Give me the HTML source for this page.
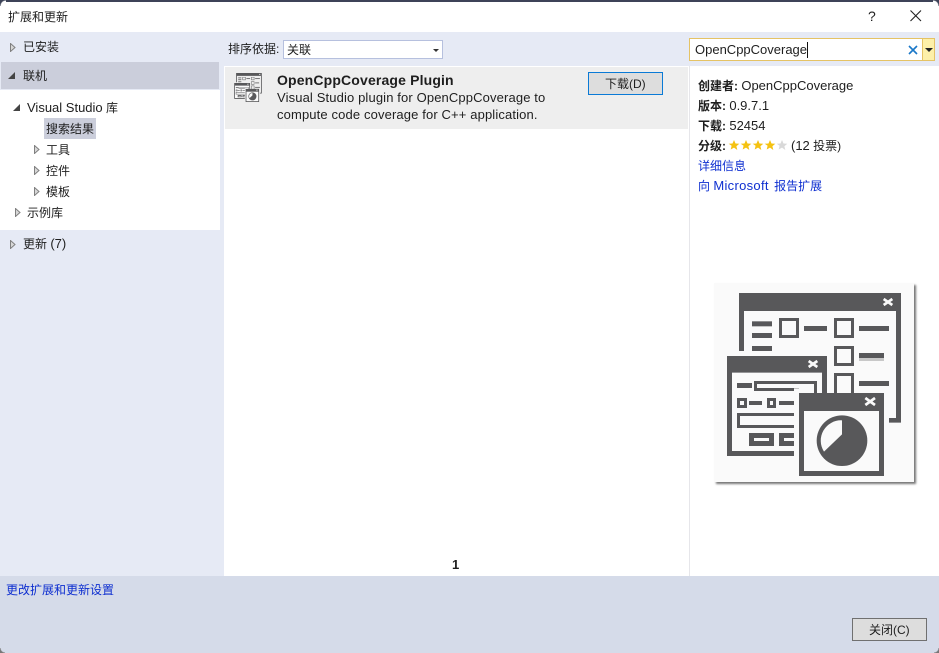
<!DOCTYPE html>
<html lang="zh">
<head>
<meta charset="utf-8">
<title>扩展和更新</title>
<style>
*{box-sizing:border-box;margin:0;padding:0}
html,body{width:939px;height:653px;overflow:hidden;background:#fff}
body{position:relative;font-family:"Liberation Sans","Noto Sans CJK SC",sans-serif;font-size:12px;color:#1e1e1e}
.a{position:absolute}
.t{position:absolute;white-space:nowrap;line-height:16px}
.l{color:#0e2fd0}
.b{font-weight:bold}
.en{font-size:13px}
.d{font-size:13px;letter-spacing:.13px}
.tri-d{position:absolute;width:0;height:0;border-bottom:7px solid #444;border-left:7px solid transparent}
</style>
</head>
<body>
<svg width="0" height="0" style="position:absolute"><defs><path id="tr" d="M.5.5V8.500L5 4.500Z" fill="#d8d8d8" stroke="#808080"/></defs></svg>
<div class="a" style="left:0;top:0;width:939px;height:2px;background:#3d4358"></div>
<div class="a" style="left:0;top:0;width:6px;height:6px;background:radial-gradient(circle at 100% 100%,#fff 5px,#3d4358 6px)"></div>
<div class="a" style="right:0;top:0;width:6px;height:6px;background:radial-gradient(circle at 0 100%,#fff 5px,#3d4358 6px)"></div>
<div class="t" style="left:8px;top:9px;font-size:12px">扩展和更新</div>
<div class="t" style="left:868px;top:8px;font-size:14px;color:#222">?</div>
<svg class="a" style="left:910px;top:10px" width="12" height="12" viewBox="0 0 12 12"><path d="M.5.5l10.5 10.500M11 .5L.5 11" stroke="#222" stroke-width="1.100" fill="none"/></svg>

<div class="a" style="left:0;top:32px;width:939px;height:544px;background:#e6eaf5"></div>

<div class="a" style="left:1px;top:62px;width:218px;height:27px;background:#cbcedb"></div>
<div class="a" style="left:0;top:90px;width:220px;height:140px;background:#fff"></div>
<svg class="a" style="left:10px;top:43px" width="6" height="9"><use href="#tr"/></svg>
<div class="t" style="left:23px;top:39px">已安装</div>
<div class="tri-d" style="left:8px;top:72px"></div>
<div class="t" style="left:23px;top:68px">联机</div>
<div class="tri-d" style="left:13px;top:104px"></div>
<div class="t" style="left:27px;top:100px"><span class="en">Visual Studio</span> 库</div>
<div class="a" style="left:44px;top:118px;width:52px;height:21px;background:#cbcedb"></div>
<div class="t" style="left:46px;top:121px">搜索结果</div>
<svg class="a" style="left:34px;top:145px" width="6" height="9"><use href="#tr"/></svg>
<div class="t" style="left:46px;top:142px">工具</div>
<svg class="a" style="left:34px;top:166px" width="6" height="9"><use href="#tr"/></svg>
<div class="t" style="left:46px;top:163px">控件</div>
<svg class="a" style="left:34px;top:187px" width="6" height="9"><use href="#tr"/></svg>
<div class="t" style="left:46px;top:184px">模板</div>
<svg class="a" style="left:15px;top:208px" width="6" height="9"><use href="#tr"/></svg>
<div class="t" style="left:27px;top:205px">示例库</div>
<svg class="a" style="left:10px;top:240px" width="6" height="9"><use href="#tr"/></svg>
<div class="t" style="left:23px;top:236px">更新 <span class="en">(7)</span></div>

<div class="t" style="left:228px;top:41px">排序依据:</div>
<div class="a" style="left:283px;top:40px;width:160px;height:19px;background:#fff;border:1px solid #b6c0de"></div>
<div class="t" style="left:287px;top:42px">关联</div>
<div class="a" style="left:433px;top:49px;width:0;height:0;border-top:3px solid #333;border-left:3.500px solid transparent;border-right:3.500px solid transparent"></div>

<div class="a" style="left:224px;top:66px;width:465px;height:510px;background:#fff"></div>
<div class="a" style="left:689px;top:66px;width:250px;height:510px;background:#fff;border-left:1px solid #e6e6ea"></div>
<div class="a" style="left:225px;top:67px;width:463px;height:62px;background:#eeeeee"></div>

<svg class="a" style="left:234px;top:73px" width="28" height="29" viewBox="66 54 522 549"><use href="#ic"/></svg>

<div class="t b" style="left:277px;top:72px;font-size:14px;letter-spacing:.15px">OpenCppCoverage Plugin</div>
<div class="t d" style="left:277px;top:90px">Visual Studio plugin for OpenCppCoverage to</div>
<div class="t d" style="left:277px;top:107px">compute code coverage for C++ application.</div>
<div class="a" style="left:588px;top:72px;width:75px;height:23px;background:#dddddd;border:1px solid #0a7ad6"></div>
<div class="t" style="left:605px;top:76px">下载(D)</div>

<div class="a" style="left:689px;top:38px;width:235px;height:23px;background:#fff;border:1px solid #e5c365"></div>
<div class="t en" style="left:695px;top:42px">OpenCppCoverage</div>
<div class="a" style="left:807px;top:42px;width:1px;height:16px;background:#111"></div>
<svg class="a" style="left:908px;top:45px" width="10" height="10" viewBox="0 0 10 10"><path d="M1 1l8 8M9 1l-8 8" stroke="#1a78c8" stroke-width="1.600" fill="none"/></svg>
<div class="a" style="left:922px;top:38px;width:13px;height:23px;background:#fdf0a9;border:1px solid #e5c365"></div>
<div class="a" style="left:925px;top:48px;width:0;height:0;border-top:4px solid #222;border-left:4px solid transparent;border-right:4px solid transparent"></div>

<div class="t" style="left:698px;top:78px"><span class="b">创建者:</span> <span class="en">OpenCppCoverage</span></div>
<div class="t" style="left:698px;top:98px"><span class="b">版本:</span> <span class="en">0.9.7.1</span></div>
<div class="t" style="left:698px;top:118px"><span class="b">下载:</span> <span class="en">52454</span></div>
<div class="t" style="left:698px;top:138px"><span class="b">分级:</span></div>
<svg class="a" style="left:728px;top:139px" width="60" height="13" viewBox="0 0 60 13">
<defs><path id="s" d="M6 1l1.500 3.500 3.800.3-2.900 2.500.9 3.700L6 8.600 2.700 10.500l.9-3.700L.7 4.800l3.800-.3z"/></defs>
<use href="#s" fill="#f5c211"/><use href="#s" x="12" fill="#f5c211"/><use href="#s" x="24" fill="#f5c211"/><use href="#s" x="36" fill="#f5c211"/><use href="#s" x="48" fill="#d9d9d9"/>
</svg>
<div class="t" style="left:791px;top:138px"><span class="en">(12</span> 投票)</div>
<div class="t l" style="left:698px;top:158px">详细信息</div>
<div class="t l" style="left:698px;top:178px">向 <span class="en" style="letter-spacing:.3px;margin-right:2px">Microsoft</span> 报告扩展</div>

<div class="a" style="left:714px;top:283px;width:200px;height:199px;background:#fafafa;box-shadow:2px 2px 2px #777"></div>
<svg class="a" style="left:705px;top:275px" width="234" height="220" viewBox="0 0 702 660">
<g id="ic" fill="#58585a">
<path d="M102 54H588V443H552V429H573V108H117V228H102Z"/>
<rect x="141" y="139" width="60" height="15"/><rect x="141" y="174" width="60" height="15"/><rect x="141" y="213" width="60" height="15"/>
<path fill-rule="evenodd" d="M222 129h60v60h-60zM231 138v42h42v-42z"/>
<rect x="297" y="153" width="69" height="15"/>
<path fill-rule="evenodd" d="M387 129h60v60h-60zM396 138v42h42v-42z"/>
<rect x="462" y="153" width="90" height="15"/>
<path fill-rule="evenodd" d="M387 213h60v60h-60zM396 222v42h42v-42z"/>
<rect x="462" y="234" width="75" height="15"/><rect x="462" y="249" width="75" height="9" fill="#c8c8c8"/>
<path d="M387 294h60v60h-9V303h-42v51h-9z"/>
<rect x="462" y="318" width="90" height="15"/>
<rect x="66" y="243" width="300" height="300" fill="#fafafa"/>
<path d="M66 243H366V354H351V293H81V528H282V543H66Z"/>
<rect x="96" y="324" width="45" height="15"/>
<path d="M147 318H336V354H327V327H156V339H282V348H147Z"/>
<path fill-rule="evenodd" d="M96 369h30v30h-30zM105 378v12h12v-12z"/>
<rect x="132" y="378" width="39" height="12"/>
<path fill-rule="evenodd" d="M186 369h27v30h-27zM195 378v12h9v-12z"/>
<rect x="222" y="378" width="60" height="12"/>
<path d="M96 414H282V423H105V450H282V459H96Z"/>
<path fill-rule="evenodd" d="M132 474h75v39h-75zM147 489v9h45v-9z"/>
<path fill-rule="evenodd" d="M222 474h60v39h-60zM237 489v9h45v-9z"/>
<rect x="267" y="340" width="15" height="210" fill="#fafafa"/>
<rect x="282" y="354" width="255" height="249"/>
<rect x="297" y="408" width="225" height="180" fill="#fafafa"/>
<circle cx="411" cy="497" r="76"/>
<path d="M411 436 A61 61 0 0 0 357 530 L411 478Z" fill="#fafafa"/>
<path d="M536 72L562 90M562 72L536 90" stroke="#fafafa" stroke-width="8" fill="none"/>
<path d="M311 258L337 276M337 258L311 276" stroke="#fafafa" stroke-width="8" fill="none"/>
<path d="M481 369L510 390M510 369L481 390" stroke="#fafafa" stroke-width="8" fill="none"/>
</g>
</svg>

<div class="t b" style="left:452px;top:557px;font-size:13px">1</div>

<div class="a" style="left:0;top:576px;width:939px;height:77px;background:#d5dbe9"></div>
<div class="t l" style="left:6px;top:582px">更改扩展和更新设置</div>
<div class="a" style="left:852px;top:618px;width:75px;height:23px;background:#dddddd;border:1px solid #707070"></div>
<div class="t" style="left:869px;top:622px">关闭(C)</div>
<div class="a" style="left:0;bottom:0;width:5px;height:5px;background:radial-gradient(circle at 100% 0,transparent 4px,#777 5px)"></div>
<div class="a" style="right:0;bottom:0;width:5px;height:5px;background:radial-gradient(circle at 0 0,transparent 4px,#777 5px)"></div>
</body>
</html>
